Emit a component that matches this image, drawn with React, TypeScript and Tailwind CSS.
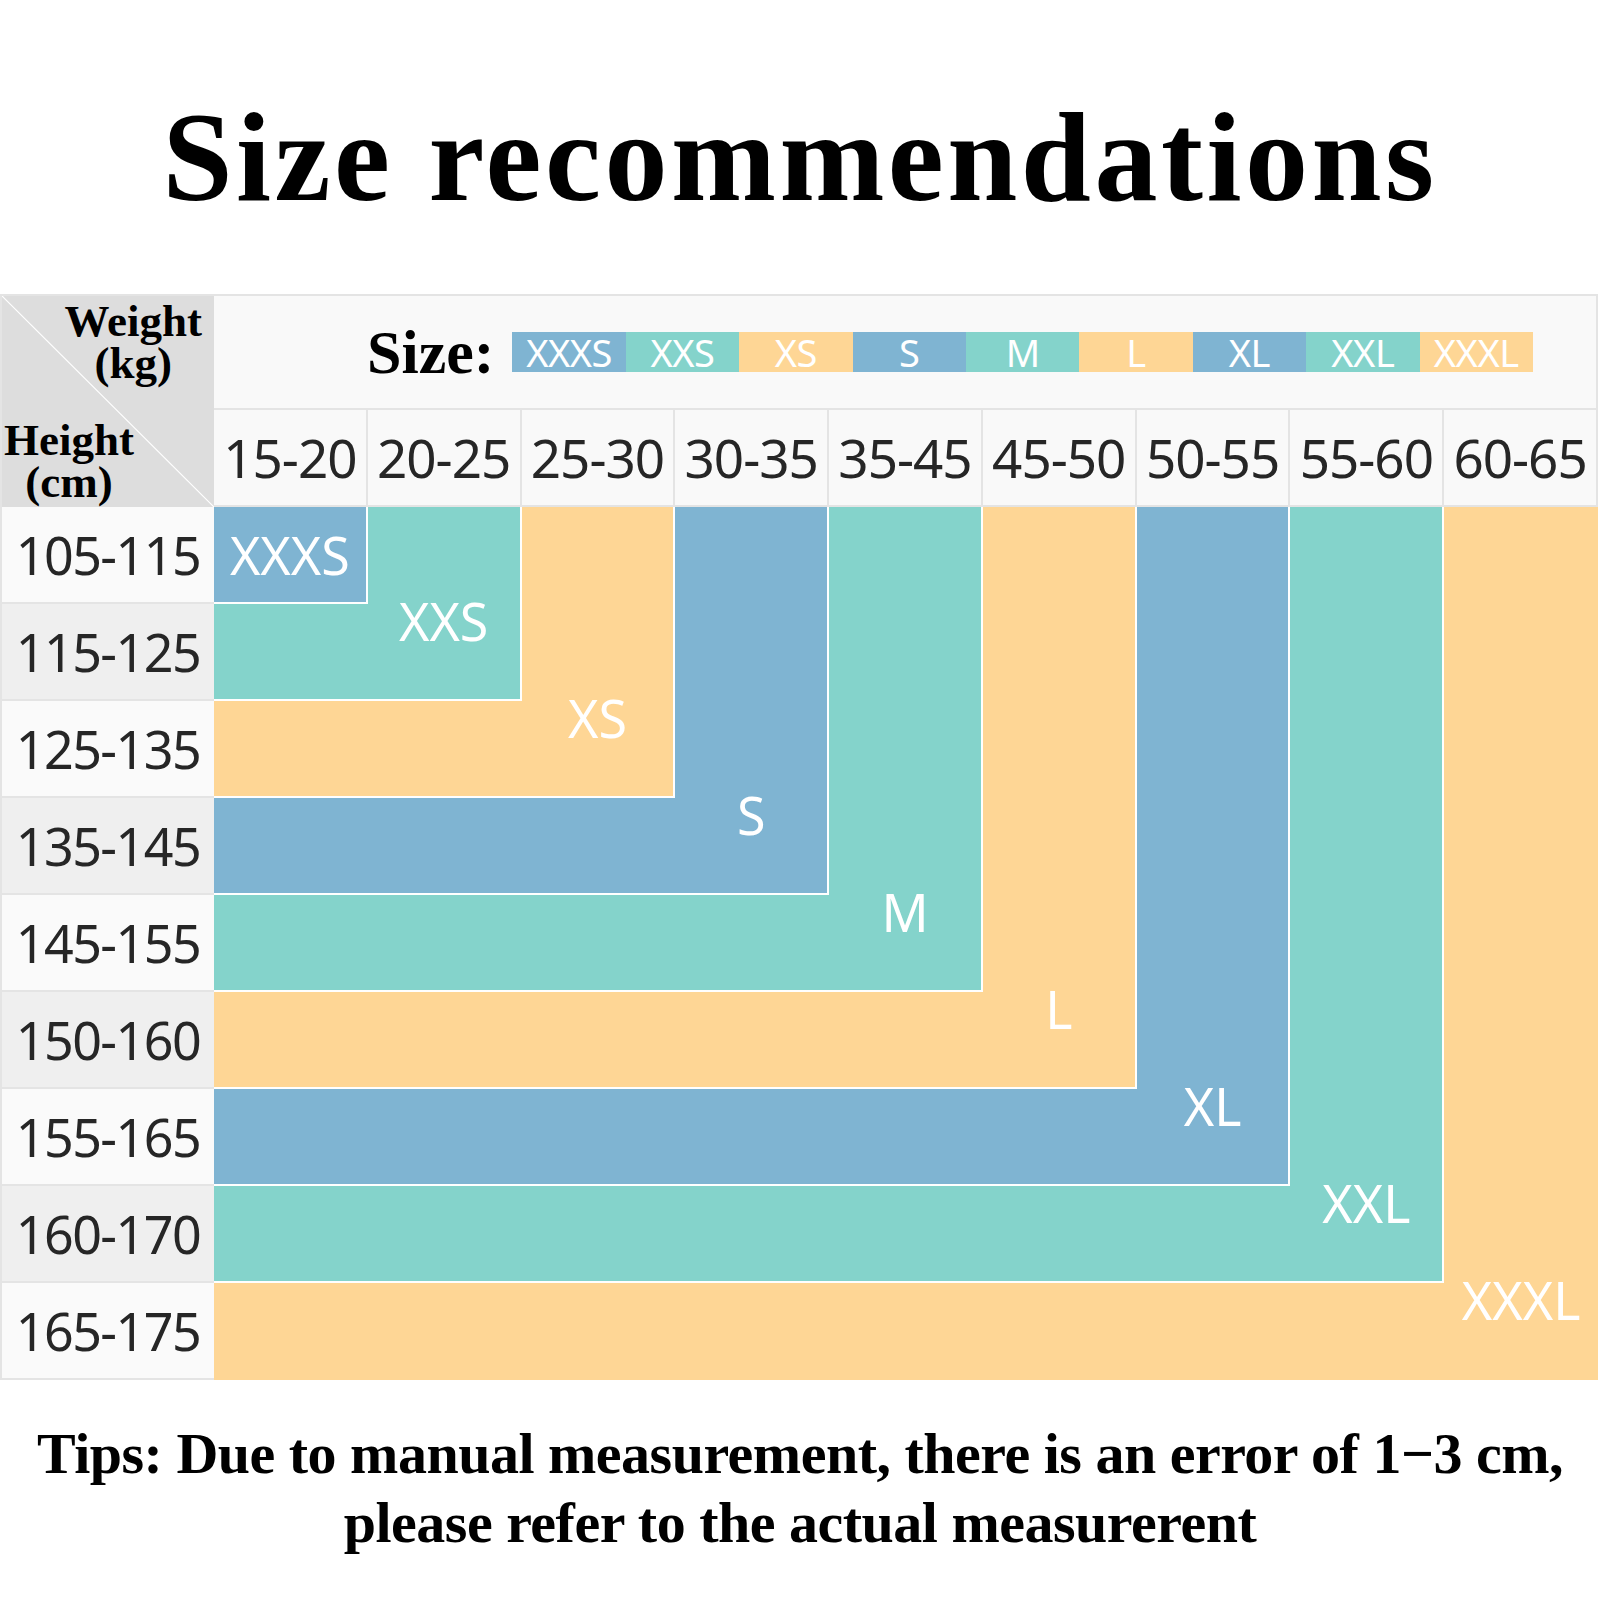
const sizes = ["XXXS", "XXS", "XS", "S", "M", "L", "XL", "XXL", "XXXL"];
const weights = ["15-20", "20-25", "25-30", "30-35", "35-45", "45-50", "50-55", "55-60", "60-65"];
const heights = ["105-115", "115-125", "125-135", "135-145", "145-155", "150-160", "155-165", "160-170", "165-175"];

// blue / teal / peach repeat through the sizes
const fills = ["bg-[#7fb4d2]", "bg-[#84d3cb]", "bg-[#fed695]"];

const serif = "font-['Liberation_Serif',serif] font-bold";
const sans = "font-['Noto_Sans',sans-serif]";

function Corner() {
    return (
        <div className="row-span-2 relative bg-[#dddddd] border-t-2 border-l-2 border-[#e4e4e4] flex flex-col justify-between pt-[4px] pb-[4px]">
            <svg className="absolute inset-0 w-full h-full" viewBox="0 0 100 100" preserveAspectRatio="none">
                <line x1="0" y1="0" x2="100" y2="100" stroke="#ffffff" strokeWidth="1.2" vectorEffect="non-scaling-stroke" />
            </svg>
            <div className={`relative self-end pr-[12px] text-center text-[45px] leading-[42px] text-black ${serif}`}>
                Weight
                <br />
                (kg)
            </div>
            <div className={`relative self-start pl-[2px] text-center text-[45px] leading-[42px] text-black ${serif}`}>
                Height
                <br />
                (cm)
            </div>
        </div>
    );
}

function Legend() {
    return (
        <div className="col-span-9 bg-[#f9f9f9] border-t-2 border-r-2 border-b-2 border-[#e4e4e4] flex items-center pl-[153px]">
            <span className={`text-[62px] leading-none text-black mr-[18px] ${serif}`}>Size:</span>
            <div className="flex">
                {sizes.map((s, i) => (
                    <div
                        key={s}
                        className={`w-[113.4px] h-[40px] flex items-center justify-center text-white text-[38px] leading-none tracking-[-0.5px] ${sans} ${fills[i % 3]}`}
                    >
                        {s}
                    </div>
                ))}
            </div>
        </div>
    );
}

export default function App() {
    return (
        <div className="w-[1600px] h-[1600px] bg-white overflow-hidden">
            <h1 className={`pt-[95px] text-center text-[126px] leading-none tracking-[3.5px] text-black ${serif}`}>
                Size recommendations
            </h1>

            <div className="mt-[73px] w-[1598px] grid grid-cols-[214px_repeat(9,minmax(0,1fr))] grid-rows-[116px_97px_repeat(9,97px)]">
                <Corner />
                <Legend />

                {weights.map((w) => (
                    <div
                        key={w}
                        className={`bg-[#f9f9f9] border-b-2 border-r-2 border-[#e4e4e4] flex items-center justify-center text-[53px] leading-none tracking-[-1px] text-[#262626] ${sans}`}
                    >
                        {w}
                    </div>
                ))}

                {heights.map((h, r) => (
                    <div key={h} className="contents">
                        <div
                            className={`border-b-2 border-l-2 border-[#e4e4e4] flex items-center justify-center text-[52px] leading-none tracking-[-1.5px] text-[#262626] ${sans} ${r % 2 === 0 ? "bg-[#fafafa]" : "bg-[#efefef]"}`}
                        >
                            {h}
                        </div>
                        {weights.map((w, c) => {
                            const i = Math.max(r, c);
                            const edgeR = c === i && i < 8 ? "border-r-2 border-white" : "";
                            const edgeB = r === i && i < 8 ? "border-b-2 border-white" : "";
                            return (
                                <div
                                    key={w}
                                    className={`flex justify-center ${i === 0 ? "items-center" : "items-start"} ${fills[i % 3]} ${edgeR} ${edgeB}`}
                                >
                                    {r === c && (
                                        <span className={`text-white text-[52px] leading-none ${sans} ${i === 0 ? "" : "-mt-[9px]"}`}>
                                            {sizes[i]}
                                        </span>
                                    )}
                                </div>
                            );
                        })}
                    </div>
                ))}
            </div>

            <p className={`mt-[39px] text-center text-[58px] leading-[69px] tracking-[-0.5px] text-black ${serif}`}>
                Tips: Due to manual measurement, there is an error of 1−3 cm,
                <br />
                please refer to the actual measurerent
            </p>
        </div>
    );
}
